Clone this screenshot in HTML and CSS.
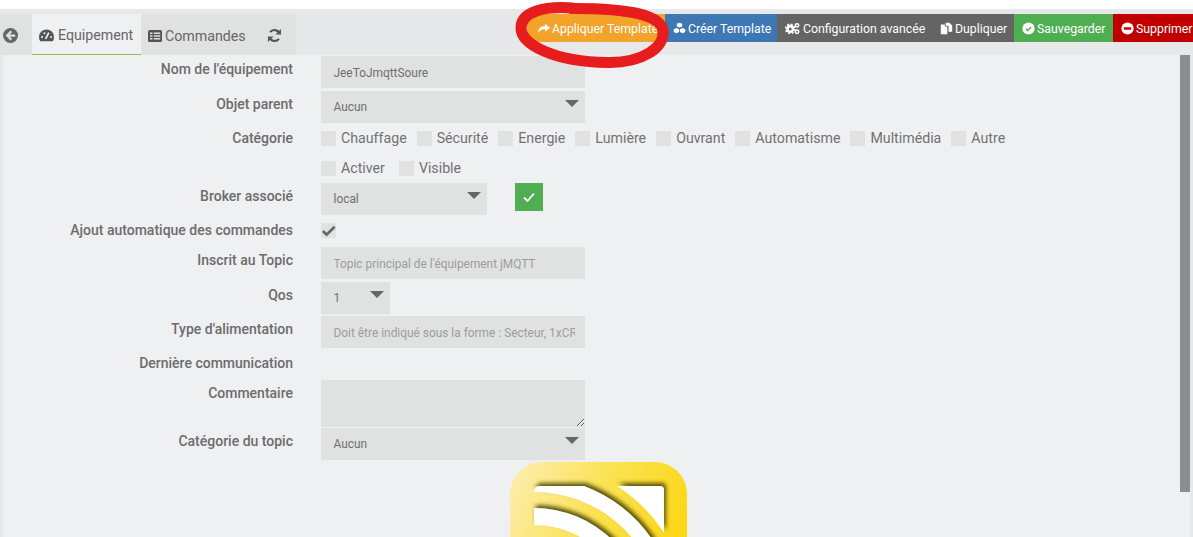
FILE: index.html
```html
<!DOCTYPE html>
<html lang="fr">
<head>
<meta charset="utf-8">
<title>Equipement</title>
<link rel="stylesheet" href="styles.css">
</head>
<body>
<div class="topgap"></div>
<header class="bar">
  <nav class="tabs">
    <div class="tab back"><svg class="ic" viewBox="0 0 16 16"><circle cx="8" cy="8" r="8" fill="#666"/><path d="M8.800 3.500 4.500 8l4.300 4.500M5.500 8H13" fill="none" stroke="#e0e2e1" stroke-width="2.400"/></svg></div>
    <div class="tab active"><svg class="ic tic" viewBox="0 0 16 16"><path d="M8 1.500a8 8 0 0 0-8 8c0 1.800.4 3.300 1.200 4.500h13.600c.8-1.200 1.200-2.700 1.200-4.500a8 8 0 0 0-8-8z" fill="#555"/><path d="M7 11.500 10.500 5" stroke="#eff0f2" stroke-width="1.800"/><circle cx="3.200" cy="9.500" r="1.100" fill="#eff0f2"/><circle cx="5.800" cy="5.500" r="1.100" fill="#eff0f2"/><circle cx="12.800" cy="9.500" r="1.100" fill="#eff0f2"/></svg>Equipement</div>
    <div class="tab cmd"><svg class="ic ticn" viewBox="0 0 14 14"><rect x="0" y="1" width="14" height="12" rx="1.500" fill="#555"/><path d="M2 4.200h2.500M2 7h2.500M2 9.800h2.500M5.800 4.200h6.400M5.800 7h6.400M5.800 9.800h6.400" stroke="#e0e2e1" stroke-width="1.500"/></svg>Commandes</div>
    <div class="tab sync"><svg class="ic" viewBox="0 0 16 16"><path d="M13.500 6A6 6 0 0 0 3.200 4.500M2.500 10a6 6 0 0 0 10.300 1.500" fill="none" stroke="#555" stroke-width="2.200"/><path d="M15 1v6H9zM1 15V9h6z" fill="#555"/></svg></div>
  </nav>
  <div class="actions">
    <button class="btn orange"><svg class="bi" viewBox="0 0 16 16"><path d="M10 2l6 5-6 5V9C6 9 3 10 2 14 .8 8.500 4 5 10 5z" fill="#fff"/></svg>Appliquer Template</button>
    <button class="btn blue"><svg class="bi" viewBox="0 0 16 16"><g fill="#fff"><path d="M8 .800l3.300 1.300v3.400L8 6.900 4.700 5.500V2.100z"/><path d="M4.200 7.500l3.300 1.300v3.600l-3.300 1.500-3.300-1.500V8.800z"/><path d="M11.800 7.500l3.300 1.300v3.600l-3.300 1.500-3.300-1.500V8.800z"/></g></svg>Créer Template</button>
    <button class="btn grey wide"><svg class="bi cogs" viewBox="0 0 20 16"><circle cx="7" cy="8.500" r="3.700" fill="none" stroke="#fff" stroke-width="3.400"/><circle cx="7" cy="8.500" r="6.300" fill="none" stroke="#fff" stroke-width="2" stroke-dasharray="2.500 2.450"/><circle cx="16" cy="3.800" r="2.300" fill="none" stroke="#fff" stroke-width="2"/><circle cx="16" cy="12.300" r="2.300" fill="none" stroke="#fff" stroke-width="2"/></svg>Configuration avancée</button>
    <button class="btn grey"><svg class="bi" viewBox="0 0 16 16"><path d="M1 3h5v2.500h3V15H1z" fill="#fff"/><path d="M7 .800h4.500L15 4.300V12h-4.500V4.500H7z" fill="#fff"/></svg>Dupliquer</button>
    <button class="btn green"><svg class="bi" viewBox="0 0 16 16"><circle cx="8" cy="8" r="7.500" fill="#fff"/><path d="M4.800 8.200 7 10.400l4.200-4.300" fill="none" stroke="#4fad52" stroke-width="1.800"/></svg>Sauvegarder</button>
    <button class="btn red"><svg class="bi" viewBox="0 0 16 16"><circle cx="8" cy="8" r="7.500" fill="#fff"/><rect x="3.500" y="6.500" width="9" height="3" fill="#c00000"/></svg>Supprimer</button>
  </div>
</header>
<svg class="scribble" viewBox="0 0 160 72" aria-hidden="true"><path d="M60 8C30 6 8 12 8 28 8 44 40 62 95 62.500 130 63 152 47 150 31 148 16 120 8 56 8.500" fill="none" stroke="#e71d1d" stroke-width="11"/></svg>
<main class="main">
  <form class="form">
    <div class="row r1"><label class="lbl">Nom de l'équipement</label><input class="field wfull" value="JeeToJmqttSoure"></div>
    <div class="row r2"><label class="lbl">Objet parent</label><div class="field sel wfull">Aucun<i class="caret"></i></div></div>
    <div class="row check r3"><label class="lbl">Catégorie</label><div class="opts"><span class="opt"><i class="box"></i>Chauffage</span><span class="opt"><i class="box"></i>Sécurité</span><span class="opt"><i class="box"></i>Energie</span><span class="opt"><i class="box"></i>Lumière</span><span class="opt"><i class="box"></i>Ouvrant</span><span class="opt"><i class="box"></i>Automatisme</span><span class="opt"><i class="box"></i>Multimédia</span><span class="opt"><i class="box"></i>Autre</span></div></div>
    <div class="row check r4"><label class="lbl"></label><div class="opts opts-wide"><span class="opt"><i class="box"></i>Activer</span><span class="opt"><i class="box"></i>Visible</span></div></div>
    <div class="row r5"><label class="lbl">Broker associé</label><div class="field sel wbroker">local<i class="caret"></i></div><span class="ok"><svg viewBox="0 0 14 14" width="14" height="14"><path d="M2 7.500 5.500 11 12 3.500" fill="none" stroke="#fff" stroke-width="1.800"/></svg></span></div>
    <div class="row check r6"><label class="lbl">Ajout automatique des commandes</label><i class="box"><svg viewBox="0 0 16 16" width="15" height="15"><path d="M2 8.500 6 12.500 14.500 4" fill="none" stroke="#666" stroke-width="2.800"/></svg></i></div>
    <div class="row r7"><label class="lbl">Inscrit au Topic</label><input class="field wfull" placeholder="Topic principal de l'équipement jMQTT"></div>
    <div class="row r8"><label class="lbl">Qos</label><div class="field sel wqos">1<i class="caret"></i></div></div>
    <div class="row r9"><label class="lbl">Type d'alimentation</label><input class="field wfull" placeholder="Doit être indiqué sous la forme : Secteur, 1xCR123"></div>
    <div class="row check r10"><label class="lbl">Dernière communication</label></div>
    <div class="row r11"><label class="lbl">Commentaire</label><textarea class="field wfull area"></textarea></div>
    <div class="row r12"><label class="lbl">Catégorie du topic</label><div class="field sel wfull">Aucun<i class="caret"></i></div></div>
    <svg class="logo" width="177" height="177" viewBox="0 0 177 177" aria-label="jMQTT">
      <defs>
        <linearGradient id="lg" x1="0" y1="0" x2="1" y2="0.450"><stop offset="0" stop-color="#fdeeb4"/><stop offset="0.500" stop-color="#fbe252"/><stop offset="1" stop-color="#fcd60e"/></linearGradient>
        <filter id="sh" x="-20%" y="-20%" width="140%" height="140%"><feDropShadow dx="2" dy="-3" stdDeviation="2" flood-color="#4a4200" flood-opacity="0.900"/></filter>
      </defs>
      <rect width="177" height="177" rx="32" fill="url(#lg)"/>
      <g fill="#fff" filter="url(#sh)">
        <path d="M107 24H150Q154 24 154 28V71A157 157 0 0 0 107 24Z"/>
        <path d="M24 30Q24 24 30 24H74A143 143 0 0 1 167 158H152A128 128 0 0 0 24 30Z"/>
        <path d="M24 46A112 112 0 0 1 136 158H119A95 95 0 0 0 24 63Z"/>
      </g>
    </svg>
  </form>
  <div class="thumb"></div>
</main>
</body>
</html>
```
FILE: styles.css
```css
html, body { margin: 0; height: 100%; overflow: hidden; }
body { background: #e7e8ea; font-family: Roboto, "Liberation Sans", sans-serif; color: #6c6c6c; position: relative; }
.topgap { height: 9px; background: #fff; }
.bar { height: 46px; padding-top: 5px; box-sizing: border-box; display: flex; justify-content: space-between; align-items: flex-start; overflow: hidden; }
.tabs { display: flex; height: 41px; background: #e0e2e1; width: 296px; flex: none; }
.tab { display: flex; align-items: center; font-size: 14.200px; color: #666; box-sizing: border-box; height: 41px; padding-top: 2px; white-space: nowrap; }
.back { width: 32px; padding-left: 3px; }
.active { width: 109px; padding-left: 7px; background: #eff0f2; border-bottom: 1px solid #9dbb3a; }
.cmd { width: 111px; padding-left: 7px; }
.sync { width: 44px; padding-left: 15px; }
.ic { width: 15px; height: 15px; flex: none; }
.tic { margin-right: 4px; }
.ticn { width: 14px; height: 14px; margin-right: 3px; }
.actions { display: flex; height: 28px; flex: none; width: 666px; }
.btn { border: 0; margin: 0; height: 28px; padding: 1px 0 0 8px; display: flex; align-items: center; color: #fff; font: 400 12.300px Roboto, sans-serif; white-space: nowrap; box-sizing: border-box; flex: none; }
.bi { width: 13px; height: 13px; margin-right: 2px; flex: none; }
.bi.cogs { width: 15px; margin-right: 3px; }
.orange { background: #f2a329; width: 138px; padding-left: 10px; }
.blue { background: #3d78b4; width: 112px; }
.grey { background: #646464; width: 82px; }
.grey.wide { width: 155px; }
.green { background: #4fad52; width: 99px; }
.red { background: #c00000; width: 80px; }
.scribble { position: absolute; left: 513px; top: 0; width: 160px; height: 72px; pointer-events: none; }
.main { margin: 0 3px; height: 482px; background: #eff0f2; display: flex; overflow: hidden; }
.form { flex: 1; min-width: 0; display: flex; flex-direction: column; padding-top: 1px; }
.thumb { width: 10px; height: 437px; background: #8c8c93; flex: none; }
.row { display: flex; align-items: flex-start; flex: none; }
.row.check { align-items: center; height: 20px; }
.lbl { width: 290px; flex: none; margin-right: 28px; text-align: right; font-size: 14px; font-weight: 500; line-height: 20px; padding-top: 3px; color: #6c6c6c; }
.check .lbl { padding-top: 0; }
.field { height: 32px; box-sizing: border-box; border: 0; outline: 0; margin: 0; background: #e0e2e1; padding: 2px 10px 0 12.500px; font: 400 11.900px Roboto, sans-serif; color: #6f6f6f; display: block; }
.field::placeholder { color: #9c9c9c; opacity: 1; }
.wfull { width: 264px; }
.wbroker { width: 166px; }
.wqos { width: 69px; }
.sel { position: relative; line-height: 32px; padding-top: 0; }
.caret { position: absolute; right: 6px; top: 9px; width: 0; height: 0; border-left: 7px solid transparent; border-right: 7px solid transparent; border-top: 7px solid #666; }
.area { height: 47px; resize: vertical; }
.opts { display: flex; gap: 10px; font-size: 14.200px; }
.opts-wide { gap: 14px; }
.opt { display: flex; align-items: center; color: #727272; white-space: nowrap; }
.box { display: block; width: 15px; height: 15px; background: #e0e2e1; flex: none; margin-right: 5px; }
.ok { width: 28px; height: 28px; margin-left: 28px; background: #4fad52; display: flex; align-items: center; justify-content: center; flex: none; }
.r2 { margin-top: 3px; }
.r3 { margin-top: 5px; }
.r4 { margin-top: 10px; }
.r5 { margin-top: 5px; }
.r6 { margin-top: 5px; }
.r7 { margin-top: 7px; }
.r8 { margin-top: 3px; }
.r9 { margin-top: 2px; }
.r10 { margin-top: 5px; }
.r11 { margin-top: 7px; }
.r12 { margin-top: 1px; }
.logo { flex: none; margin: 2px 0 0 507px; display: block; }
```
